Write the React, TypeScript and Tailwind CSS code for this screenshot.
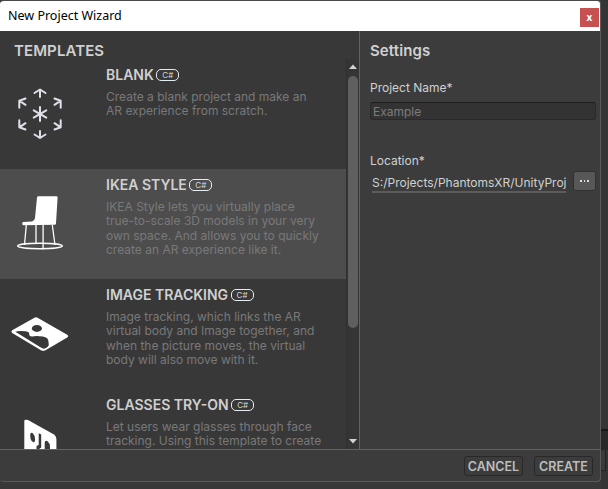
import React from "react";

function BlankIcon() {
  return (
    <svg width="106" height="110" viewBox="0 0 106 110" fill="none" stroke="#e0e0ea" strokeWidth="2" strokeLinecap="round" strokeLinejoin="round">
      <path d="M40 31v7M34.500 34l5.500-3.500 5.500 3.500M40 79v-7M34.500 75.500l5.500 3.500 5.500-3.500" />
      <path d="M25.500 39.500l-6.200 2.300v7M20 42.200l5.500 3.600M54.500 39.500l6.200 2.300v7M60 42.200l-5.500 3.600" />
      <path d="M25.500 70.500l-6.200-2.300v-7M20 67.800l5.500-3.600M54.500 70.500l6.200-2.300v-7M60 67.800l-5.500-3.600" />
      <path d="M40 48v14M33.700 51.400l12.600 7.200M46.300 51.400l-12.600 7.200" />
    </svg>
  );
}

function ChairIcon() {
  return (
    <svg width="106" height="110" viewBox="0 0 106 110" fill="none" stroke="#fff">
      <path d="M38.500 27.300H56.500Q57.700 27.300 57.600 28.500L56 54.500Q56 55.700 54.500 55.800L23.500 56.300Q22.300 56.300 22.300 55V54Q22.300 53 23.500 53L32 52.500Q34.700 52 35 49L37 28.500Q37.100 27.300 38.500 27.300Z" fill="#fff" stroke="none" />
      <path d="M26.300 56L24.500 76M36 56V74M43.100 56V80.500M52.300 56L55 76" strokeWidth="1.300" />
      <ellipse cx="40" cy="77" rx="22.300" ry="2.700" strokeWidth="1.400" />
    </svg>
  );
}

function ImageIcon() {
  return (
    <svg width="106" height="110" viewBox="0 0 106 110">
      <path
        fillRule="evenodd"
        fill="#fff"
        d="M12.200 51.200L34 38.900Q36 37.800 38 38.900L67.200 55.800Q69.200 57.200 67.200 58.600L45.500 71.200Q43.300 72.200 41 71.200L12.200 54Q10.500 52.600 12.200 51.200ZM31.800 49.400a5.100 3.500 0 1 0 10.200 0a5.100 3.500 0 1 0-10.200 0ZM15.300 52.800Q18 51.700 25 52.200Q29 52.500 29.300 54.500Q28.500 57.300 32 57.400Q36 56.500 43 57.500Q48 58.500 48.300 61.500L48.800 65.500Q48.500 68.500 44 69.700Q42.500 69.700 40 68Z"
      />
    </svg>
  );
}

function GlassesIcon() {
  return (
    <svg width="106" height="110" viewBox="0 0 106 110">
      <path d="M24.300 32Q24.300 30.500 26 30.700L28 31L54 45.500Q56.300 47 56.400 50V75L24.300 65Z" fill="#fff" />
      <path d="M30.200 46Q30.300 42.800 32.600 44Q34.800 46 35 50Q35.200 54 33 53Q30.200 51.500 30.200 46ZM38.700 44.200L41.200 45.600V58.500L36.500 62V57L38.700 56ZM44.700 54Q44.700 51 47.300 52Q50 54 50 58V62H44.700Z" fill="#383838" />
    </svg>
  );
}

const templates = [
  { title: "BLANK", lines: ["Create a blank project and make an", "AR experience from scratch."], icon: <BlankIcon /> },
  {
    title: "IKEA STYLE",
    lines: ["IKEA Style lets you virtually place", "true-to-scale 3D models in your very", "own space. And allows you to quickly", "create an AR experience like it."],
    icon: <ChairIcon />,
    selected: true,
  },
  {
    title: "IMAGE TRACKING",
    lines: ["Image tracking, which links the AR", "virtual body and Image together, and", "when the picture moves, the virtual", "body will also move with it."],
    icon: <ImageIcon />,
  },
  { title: "GLASSES TRY-ON", lines: ["Let users wear glasses through face", "tracking. Using this template to create"], icon: <GlassesIcon /> },
];

function Badge() {
  return (
    <span className="ml-[2.500px] mt-[2px] flex h-3 w-[23px] items-center justify-center rounded-[5px] border border-[#e4ecf2] text-[8px] font-normal leading-none text-[#d8d8d8]">
      C#
    </span>
  );
}

export default function App() {
  return (
    <div className="flex h-[489px] w-[608px] overflow-hidden bg-[#383838] font-['Inter',sans-serif] text-[#d0d0d0]">
      <div className="flex w-[601px] shrink-0 flex-col">
        <div className="flex h-[482px] flex-col overflow-hidden rounded-[4px] border-r border-b border-t border-[#5a5a5a] border-t-[#4a4a4a] bg-[#3c3c3c]">
          <header className="flex h-[30px] shrink-0 items-center justify-between bg-white pl-2 pr-px font-['Noto_Sans',sans-serif] text-[12.5px] text-black">
            <span>New Project Wizard</span>
            <button className="mt-[3px] flex h-[19px] w-[19px] items-center justify-center bg-[#c75050] pb-[2px] text-[10px] font-bold leading-none text-white">x</button>
          </header>
          <div className="flex h-[418px] shrink-0">
            <section className="flex w-[360px] shrink-0 flex-col border-r border-[#626262] bg-[#383838]">
              <h2 className="h-7 shrink-0 pl-[14px] pt-[8px] text-[15px] font-semibold leading-6 tracking-[0.1px]">TEMPLATES</h2>
              <div className="flex h-[390px]">
                <div className="h-full w-[346px] overflow-hidden">
                  {templates.map((t) => (
                    <article key={t.title} className={t.selected ? "flex h-[110px] bg-[#4d4d4d]" : "flex h-[110px]"}>
                      {t.icon}
                      <div className="whitespace-nowrap pt-[5px]">
                        <h3 className="flex h-5 items-center text-[14px] font-semibold">
                          {t.title}
                          <Badge />
                        </h3>
                        <div className="mt-[5.500px] text-[12px] leading-[14.5px] text-[#797979]">
                          {t.lines.map((l) => (
                            <p key={l}>{l}</p>
                          ))}
                        </div>
                      </div>
                    </article>
                  ))}
                </div>
                <div className="flex w-[13px] flex-col items-center border-l border-[#303030] bg-[#353535]">
                  <svg width="12" height="17" viewBox="0 0 12 17">
                    <path d="M2 10L6 5.500L10 10Z" fill="#d2d2d2" />
                  </svg>
                  <div className="h-[252px] w-[10px] rounded-full bg-[#5f5f5f]" />
                  <svg className="mt-auto" width="12" height="17" viewBox="0 0 12 17">
                    <path d="M2 7L6 11.500L10 7Z" fill="#d2d2d2" />
                  </svg>
                </div>
              </div>
            </section>
            <section className="flex-1 pl-[10px] pr-1">
              <h2 className="pt-[8px] text-[15px] font-semibold leading-6 tracking-[0.1px]">Settings</h2>
              <label className="mt-[17px] block text-[12px] leading-4">Project Name*</label>
              <div className="mt-[6px] flex h-[18px] items-center rounded-[3px] border border-[#2a2a2a] border-t-[#1d1d1d] bg-[#333] pl-[2px] text-[12px] text-[#7c7c7c]">
                <span className="mt-px">Example</span>
              </div>
              <label className="mt-[33px] block text-[12px] leading-4">Location*</label>
              <div className="mt-[3px] flex items-start justify-between pl-[2px]">
                <div className="h-[21px] w-[194px] whitespace-nowrap border-b-2 border-[#5c5c5c] pt-[3px] text-[12px] leading-4">
                  S:/Projects/PhantomsXR/UnityProj
                </div>
                <button className="-mt-px flex h-5 w-[23px] items-center justify-center gap-[2px] rounded-[3px] border border-[#303030] bg-[#585858]">
                  <i className="h-[1.5px] w-[1.5px] bg-[#ddd]" />
                  <i className="h-[1.5px] w-[1.5px] bg-[#ddd]" />
                  <i className="h-[1.5px] w-[1.5px] bg-[#ddd]" />
                </button>
              </div>
            </section>
          </div>
          <footer className="flex flex-1 items-start justify-end gap-[11px] border-t border-[#626262] pr-[7px] pt-[6px] text-[12.5px] font-semibold text-[#bdbdbd]">
            <button className="h-5 w-[59px] rounded-[3px] border border-[#282828] pt-[2px] leading-none">CANCEL</button>
            <button className="h-5 w-[59px] rounded-[3px] border border-[#282828] pt-[2px] leading-none">CREATE</button>
          </footer>
        </div>
      </div>
      <div className="flex flex-1 flex-col bg-[#353535]">
        <div className="h-[429px]" />
        <div className="h-[21px] border-t-2 border-[#181818] bg-[#292929]" />
        <div className="mr-[2px] h-[21px] border-b border-r border-[#222] bg-[#3a3a3a]" />
      </div>
    </div>
  );
}
